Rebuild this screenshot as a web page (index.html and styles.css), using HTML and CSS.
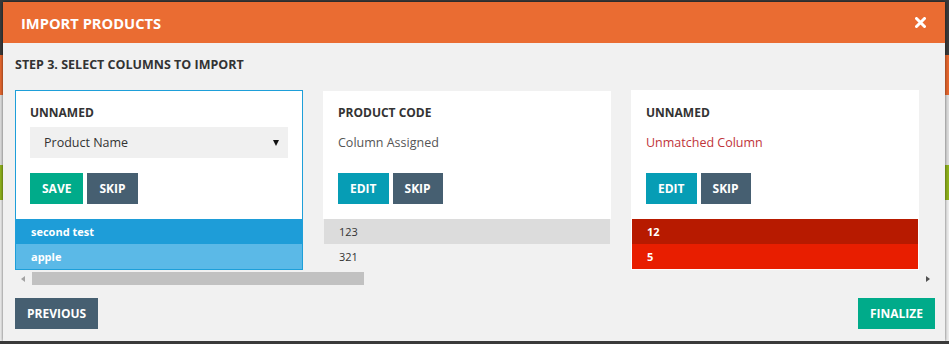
FILE: index.html
```html
<!DOCTYPE html>
<html lang="en">
<head>
    <meta charset="UTF-8">
    <meta name="viewport" content="width=device-width, initial-scale=1.0">
    <title>Import Products</title>
    <link rel="stylesheet" href="styles.css">
</head>
<body>
    <div class="modal">
        <!-- Header -->
        <div class="modal-header">
            <h1>IMPORT PRODUCTS</h1>
            <button class="close" aria-label="Close">
                <svg width="11" height="11" viewBox="0 0 11 11">
                    <path d="M1.5 1.5 L9.5 9.5 M9.5 1.5 L1.5 9.5" stroke="#fff" stroke-width="3" stroke-linecap="round"/>
                </svg>
            </button>
        </div>

        <!-- Body -->
        <div class="modal-body">
            <h2>STEP 3. SELECT COLUMNS TO IMPORT</h2>

            <div class="columns">
                <div class="column active">
                    <div class="column-head">
                        <h3>UNNAMED</h3>
                        <div class="select-wrap">
                            <select>
                                <option>Product Name</option>
                                <option>Product Code</option>
                                <option>Price</option>
                            </select>
                        </div>
                        <div class="actions">
                            <button class="btn btn-save">SAVE</button>
                            <button class="btn btn-skip">SKIP</button>
                        </div>
                    </div>
                    <div class="row">second test</div>
                    <div class="row">apple</div>
                </div>

                <div class="column assigned">
                    <div class="column-head">
                        <h3>PRODUCT CODE</h3>
                        <p class="status">Column Assigned</p>
                        <div class="actions">
                            <button class="btn btn-edit">EDIT</button>
                            <button class="btn btn-skip">SKIP</button>
                        </div>
                    </div>
                    <div class="row">123</div>
                    <div class="row">321</div>
                </div>

                <div class="column unmatched">
                    <div class="column-head">
                        <h3>UNNAMED</h3>
                        <p class="status">Unmatched Column</p>
                        <div class="actions">
                            <button class="btn btn-edit">EDIT</button>
                            <button class="btn btn-skip">SKIP</button>
                        </div>
                    </div>
                    <div class="row">12</div>
                    <div class="row">5</div>
                </div>
            </div>

            <!-- Horizontal scrollbar -->
            <div class="scrollbar">
                <span class="arrow arrow-left"></span>
                <div class="track">
                    <div class="thumb"></div>
                </div>
                <span class="arrow arrow-right"></span>
            </div>
        </div>

        <!-- Footer -->
        <div class="modal-footer">
            <button class="btn btn-skip">PREVIOUS</button>
            <button class="btn btn-save">FINALIZE</button>
        </div>
    </div>
</body>
</html>
```

FILE: styles.css
```css
/* General Styles */
* {
    box-sizing: border-box;
}

body {
    margin: 0;
    font-family: "Open Sans", "Noto Sans", sans-serif;
    color: #333;
    background: linear-gradient(to bottom, #3a3a3a 0, #3a3a3a 55px, #e5672f 55px, #e5672f 95px, #dcdcdc 95px, #dcdcdc 165px, #8fb21c 165px, #8fb21c 200px, #ececec 200px);
    overflow: hidden;
}

.modal {
    width: 942px;
    height: 339px;
    margin: 2px 0 0 3px;
    background-color: #f1f1f1;
    box-shadow: 0 0 3px rgba(0, 0, 0, 0.6);
    display: flex;
    flex-direction: column;
}

/* Header */
.modal-header {
    height: 41px;
    flex-shrink: 0;
    background-color: #ea6c32;
    display: flex;
    align-items: center;
    justify-content: space-between;
    padding: 0 19px 0 18px;
}

.modal-header h1 {
    margin: 0;
    color: #fff;
    font-size: 14.7px;
    font-weight: 700;
}

.close {
    border: none;
    background: none;
    padding: 0;
    display: flex;
    cursor: pointer;
}

/* Body */
.modal-body {
    padding: 13px 10px 0 12px;
}

.modal-body h2 {
    margin: 0 0 16px;
    font-size: 12.5px;
    line-height: 18px;
    font-weight: 700;
    color: #333;
}

.columns {
    display: flex;
    gap: 20px;
    width: 920px;
    overflow: hidden;
}

.column {
    flex: 0 0 288px;
    background-color: #fff;
    border: 1px solid transparent;
    border-bottom: none;
}

.column.active {
    border: 1px solid #1e9fd9;
}

.column-head {
    padding: 14px 14px 15px;
}

.column h3 {
    margin: 0 0 6px;
    font-size: 12px;
    line-height: 16px;
    font-weight: 700;
    color: #333;
}

.select-wrap {
    position: relative;
}

.select-wrap select {
    width: 100%;
    height: 31px;
    border: none;
    border-radius: 0;
    background-color: #f0f0f0;
    font-family: inherit;
    font-size: 12.5px;
    color: #333;
    padding: 0 14px;
    appearance: none;
    -webkit-appearance: none;
    outline: none;
}

.select-wrap::after {
    content: '';
    position: absolute;
    right: 9px;
    top: 13px;
    border-left: 3.5px solid transparent;
    border-right: 3.5px solid transparent;
    border-top: 6px solid #111;
    pointer-events: none;
}

.status {
    margin: 0;
    height: 31px;
    line-height: 31px;
    font-size: 12.5px;
    color: #555;
}

.unmatched .status {
    color: #c0343a;
}

.actions {
    display: flex;
    gap: 4px;
    margin-top: 15px;
}

/* Scrollbar */
.scrollbar {
    display: flex;
    width: 920px;
    height: 15px;
    background-color: #f1f1f1;
}

.arrow {
    flex: 0 0 15px;
    display: flex;
    align-items: center;
    justify-content: center;
    padding-top: 2px;
}

.arrow::before {
    content: '';
    border-top: 3.5px solid transparent;
    border-bottom: 3.5px solid transparent;
}

.arrow-left::before {
    border-right: 4px solid #a3a3a3;
}

.arrow-right::before {
    border-left: 4px solid #505050;
}

.track {
    flex: 1;
    padding: 2px 2px 0;
}

.thumb {
    width: 332px;
    height: 13px;
    background-color: #c1c1c1;
}

/* Buttons */
.btn {
    height: 31px;
    border: none;
    padding: 0 12px;
    font-family: inherit;
    font-size: 12px;
    font-weight: 700;
    color: #fff;
    cursor: pointer;
}

.btn-save {
    background-color: #00ab8a;
}

.btn-skip {
    background-color: #465f71;
}

.btn-edit {
    background-color: #069db5;
}

/* Data Rows */
.row {
    height: 25px;
    line-height: 25px;
    padding: 0 15px;
    font-size: 11px;
    font-weight: 700;
    color: #fff;
}

.active .row:nth-child(2) {
    background-color: #1e9dd8;
}

.active .row:nth-child(3) {
    background-color: #5bb9e7;
}

.assigned {
    background: linear-gradient(to bottom, #fff 0, #fff 128px, transparent 128px);
}

.assigned .row {
    font-weight: 400;
    color: #333;
}

.assigned .row:nth-child(2) {
    background-color: #dcdcdc;
}

.unmatched .row:nth-child(2) {
    background-color: #b71a00;
}

.unmatched .row:nth-child(3) {
    background-color: #e81e00;
}

/* Footer */
.modal-footer {
    display: flex;
    justify-content: space-between;
    padding: 13px 10px 0 12px;
}
```
